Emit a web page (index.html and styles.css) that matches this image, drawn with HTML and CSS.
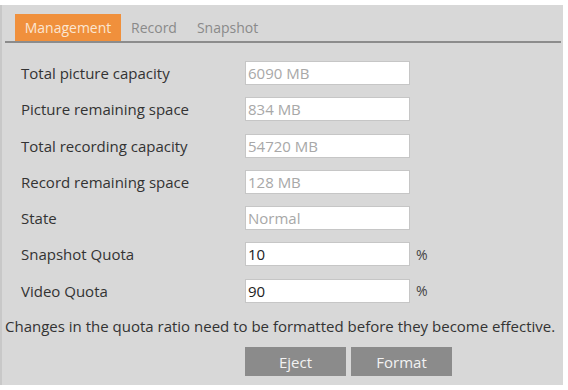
FILE: index.html
```html
<!DOCTYPE html>
<html>
<head>
<meta charset="utf-8">
<link rel="stylesheet" href="styles.css">
</head>
<body>
<div class="panel">
  <div class="tabs">
    <div class="tab active">Management</div>
    <div class="tab">Record</div>
    <div class="tab">Snapshot</div>
  </div>
  <div class="form">
    <div class="row"><span class="label">Total picture capacity</span><div class="field ro">6090 MB</div></div>
    <div class="row"><span class="label">Picture remaining space</span><div class="field ro">834 MB</div></div>
    <div class="row"><span class="label">Total recording capacity</span><div class="field ro">54720 MB</div></div>
    <div class="row"><span class="label">Record remaining space</span><div class="field ro">128 MB</div></div>
    <div class="row"><span class="label">State</span><div class="field ro">Normal</div></div>
    <div class="row"><span class="label">Snapshot Quota</span><div class="field">10</div><span class="unit">%</span></div>
    <div class="row"><span class="label">Video Quota</span><div class="field">90</div><span class="unit">%</span></div>
  </div>
  <p class="note">Changes in the quota ratio need to be formatted before they become effective.</p>
  <div class="actions">
    <button class="btn">Eject</button>
    <button class="btn">Format</button>
  </div>
</div>
</body>
</html>
```
FILE: styles.css
```css
html, body {
  margin: 0;
  padding: 0;
  background: #ffffff;
}
body {
  font-family: "Open Sans", "Noto Sans", sans-serif;
  font-size: 14px;
  color: #333;
}
.panel {
  width: 563px;
  height: 380px;
  margin-top: 5px;
  background: #d8d8d8;
  border-left: 2px solid #c8c8c8;
  box-sizing: border-box;
  padding-left: 3px;
  padding-top: 9px;
}
.tabs {
  display: flex;
  border-bottom: 2px solid #8c8c8c;
  padding-left: 10px;
  height: 27px;
  margin-right: 2px;
}
.tab {
  padding: 0 10px;
  line-height: 27px;
  color: #8a8a8a;
  font-size: 14px;
}
.tab.active {
  background: #f0903c;
  color: #fbe6d2;
  width: 106px;
  box-sizing: border-box;
  text-align: center;
  padding: 0;
}
.form {
  padding-top: 18px;
  padding-left: 16px;
}
.row {
  display: flex;
  align-items: center;
  height: 24px;
  margin-bottom: 12.3px;
  font-size: 15px;
}
.label {
  width: 224px;
  color: #333;
}
.field {
  width: 165px;
  height: 24px;
  box-sizing: border-box;
  background: #fff;
  border: 1px solid #c6c6c6;
  padding-left: 2px;
  line-height: 22px;
  color: #222;
}
.field.ro {
  color: #a8a8a8;
}
.unit {
  margin-left: 6px;
  color: #444;
  font-size: 14px;
}
.note {
  margin: 0;
  padding-top: 1px;
  line-height: 20px;
  color: #333;
  font-size: 15px;
}
.actions {
  display: flex;
  gap: 5px;
  padding-left: 240px;
  padding-top: 11px;
}
.btn {
  width: 101px;
  height: 29px;
  border: none;
  background: #8b8b8b;
  color: #f2f2f2;
  font-family: inherit;
  font-size: 15px;
  padding: 0;
}
```
